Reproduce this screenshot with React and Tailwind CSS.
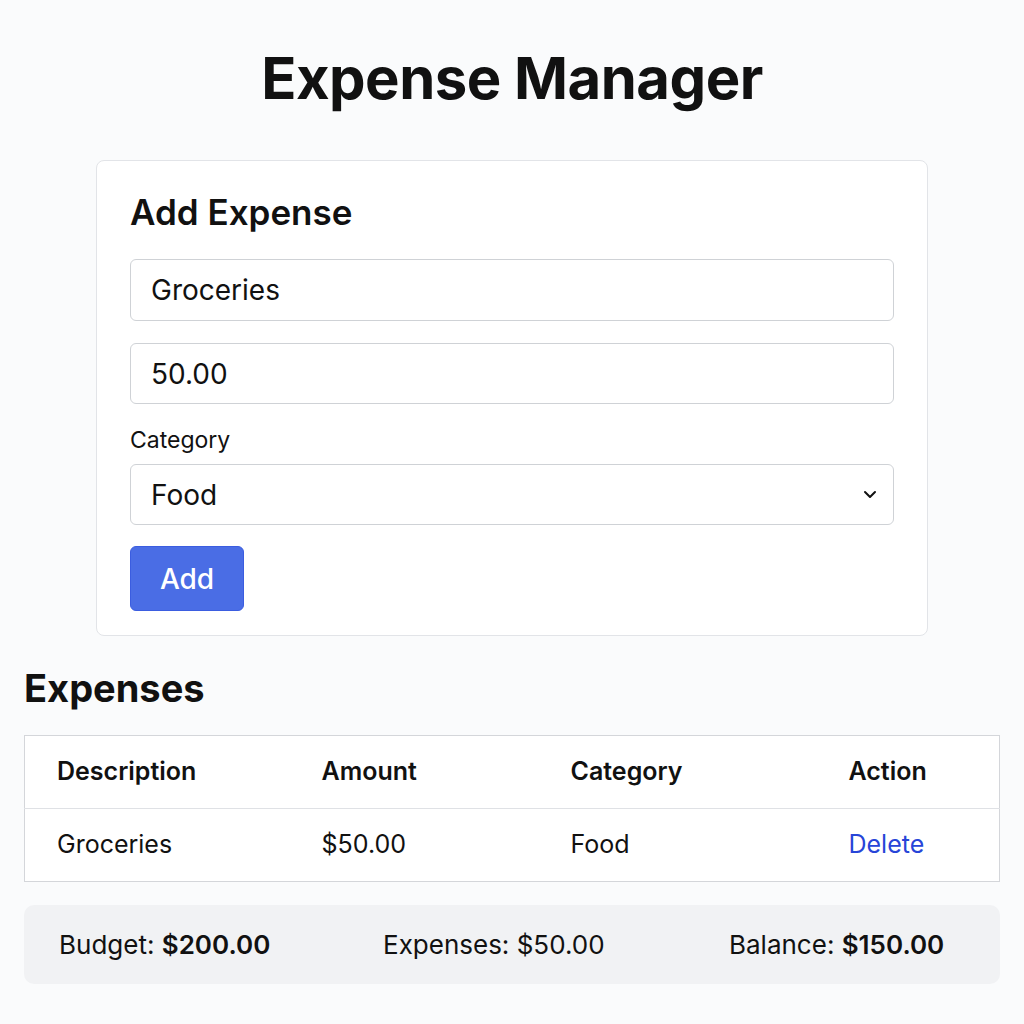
import { useState } from 'react';

const font = { fontFamily: 'Inter, "Noto Sans", sans-serif' };

export default function App() {
  const [desc, setDesc] = useState('Groceries');
  const [amount, setAmount] = useState('50.00');
  const [category, setCategory] = useState('Food');
  const expenses = [{ id: 1, description: 'Groceries', amount: 50, category: 'Food' }];
  const budget = 200;
  const total = expenses.reduce((s, e) => s + e.amount, 0);

  return (
    <div className="min-h-[1024px] bg-[#fafbfc] text-[#111] px-6 pt-[40px]" style={font}>
      <h1 className="text-center text-[58px] font-bold leading-[76px] tracking-[-0.5px]">Expense Manager</h1>

      <div className="mx-auto mt-[44px] w-[832px] rounded-lg border border-[#e2e4e8] bg-white px-[33px] pt-[30px] pb-[24px]">
        <h2 className="text-[35px] font-semibold leading-[42px]">Add Expense</h2>
        <input
          value={desc}
          onChange={e => setDesc(e.target.value)}
          className="mt-[26px] block h-[62px] w-full rounded-md border border-[#cfd2d6] px-5 text-[28px] outline-none"
        />
        <input
          value={amount}
          onChange={e => setAmount(e.target.value)}
          className="mt-[22px] block h-[61px] w-full rounded-md border border-[#cfd2d6] px-5 text-[28px] outline-none"
        />
        <label className="mt-[22px] block text-[23px] leading-[28px]">Category</label>
        <div className="relative mt-[10px]">
          <select
            value={category}
            onChange={e => setCategory(e.target.value)}
            className="block h-[61px] w-full appearance-none rounded-md border border-[#cfd2d6] bg-white px-5 text-[28px] outline-none"
          >
            <option>Food</option>
            <option>Transport</option>
            <option>Other</option>
          </select>
          <svg className="pointer-events-none absolute right-[17px] top-[26px]" width="14" height="9" viewBox="0 0 14 9" fill="none">
            <path d="M2 2l5 5 5-5" stroke="#111" strokeWidth="2" strokeLinecap="round" strokeLinejoin="round" />
          </svg>
        </div>
        <button className="mt-[21px] h-[65px] w-[114px] rounded-md border border-[#3b5de0] bg-[#4a6de5] text-[28px] font-medium text-white">
          Add
        </button>
      </div>

      <h2 className="mt-[30px] text-[38px] font-bold leading-[44px]">Expenses</h2>
      <table className="mt-[25px] w-full border border-[#d4d6da] bg-white text-left text-[25px]">
        <thead>
          <tr className="h-[73px] border-b border-[#dfe1e5]">
            <th className="w-[265px] pl-[32px] font-semibold">Description</th>
            <th className="w-[249px] pl-[32px] font-semibold">Amount</th>
            <th className="w-[278px] pl-[32px] font-semibold">Category</th>
            <th className="pl-[32px] font-semibold">Action</th>
          </tr>
        </thead>
        <tbody>
          {expenses.map(e => (
            <tr key={e.id} className="h-[73px]">
              <td className="pl-[32px]">{e.description}</td>
              <td className="pl-[32px]">${e.amount.toFixed(2)}</td>
              <td className="pl-[32px]">{e.category}</td>
              <td className="pl-[32px] text-[#2745d8]">Delete</td>
            </tr>
          ))}
        </tbody>
      </table>

      <div className="mt-[23px] flex h-[79px] items-center rounded-[10px] bg-[#f1f2f4] pl-[35px] text-[26px]">
        <span className="w-[324px]">Budget: <b className="font-semibold">${budget.toFixed(2)}</b></span>
        <span className="w-[346px]">Expenses: ${total.toFixed(2)}</span>
        <span>Balance: <b className="font-semibold">${(budget - total).toFixed(2)}</b></span>
      </div>
    </div>
  );
}
